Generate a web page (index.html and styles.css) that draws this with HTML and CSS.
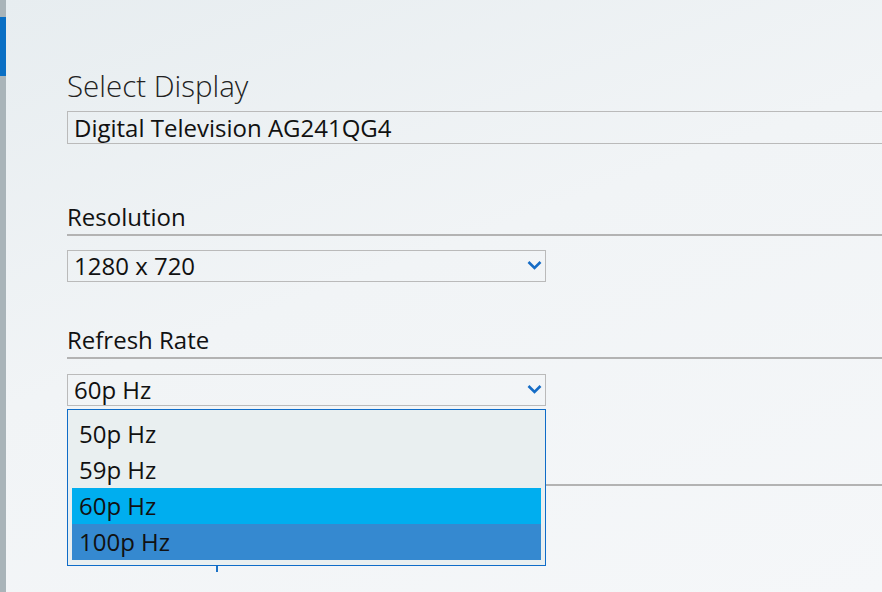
FILE: index.html
```html
<!DOCTYPE html>
<html lang="en">
<head>
<meta charset="utf-8">
<title>Display Settings</title>
<link rel="stylesheet" href="styles.css">
</head>
<body>
<div class="app">
  <div class="rail"><div class="rail-active"></div></div>
  <div class="main">
    <h1 class="title">Select Display</h1>
    <div class="box box-wide">Digital Television AG241QG4</div>

    <div class="section-label label-res">Resolution</div>
    <div class="box select select-res">
      <span>1280 x 720</span>
      <svg class="chev" width="15" height="10" viewBox="0 0 15 10"><path d="M1.5 2 L7.5 8 L13.5 2" fill="none" stroke="#156cc6" stroke-width="2.6"/></svg>
    </div>

    <div class="section-label label-refresh">Refresh Rate</div>
    <div class="select-wrap">
      <div class="box select">
        <span>60p Hz</span>
        <svg class="chev" width="15" height="10" viewBox="0 0 15 10"><path d="M1.5 2 L7.5 8 L13.5 2" fill="none" stroke="#156cc6" stroke-width="2.6"/></svg>
      </div>
      <div class="dropdown">
        <div class="item">50p Hz</div>
        <div class="item">59p Hz</div>
        <div class="item item-hover">60p Hz</div>
        <div class="item item-selected">100p Hz</div>
      </div>
    </div>

    <div class="section-label label-next">&nbsp;</div>
    <div class="under"><div class="tick"></div></div>
  </div>
</div>
</body>
</html>
```

FILE: styles.css
```css
* { box-sizing: border-box; }
html, body { margin: 0; padding: 0; height: 100%; }
body {
  font-family: "Open Sans", "Noto Sans", sans-serif;
  color: #111;
  background: linear-gradient(160deg, #e7edf0 0%, #f1f4f6 45%, #f5f7f9 100%);
  overflow: hidden;
}
.app { display: flex; height: 592px; }
.rail {
  width: 6px;
  flex: none;
  background: #a9b4b9;
}
.rail-active {
  margin-top: 17px;
  height: 59px;
  background: #0a6fc4;
}
.main {
  flex: 1;
  padding-left: 61px;
  padding-top: 66px;
  overflow: hidden;
}
.title {
  margin: 0 0 5px 0;
  font-size: 29.5px;
  line-height: 40px;
  font-weight: 300;
  color: #222;
}
.box {
  height: 33px;
  border: 1px solid #bababa;
  padding-left: 6px;
  font-size: 24px;
  line-height: 31px;
  color: #111;
}
.box-wide { margin-right: -20px; }
.section-label {
  font-size: 24px;
  line-height: 30px;
  padding-bottom: 2px;
  border-bottom: 2px solid #b3b3b3;
  color: #111;
}
.label-res { margin-top: 58px; }
.label-refresh { margin-top: 43px; }
.label-next { margin-top: 46px; }
.select {
  width: 479px;
  height: 32px;
  line-height: 30px;
  display: flex;
  align-items: center;
  justify-content: space-between;
  padding-right: 3px;
}
.select span { line-height: 30px; }
.select-res { margin-top: 14px; }
.chev { display: block; margin-top: -2px; }
.select-wrap { position: relative; margin-top: 15px; width: 479px; }
.dropdown {
  position: absolute;
  left: 0;
  top: 35px;
  width: 479px;
  height: 157px;
  border: 1px solid #0f6cc8;
  background: #e9eff0;
  padding: 6px 4px 5px 4px;
  z-index: 5;
}
.item {
  height: 36px;
  line-height: 36px;
  font-size: 24px;
  padding-left: 7px;
  color: #111;
}
.item-hover { background: #00aeef; }
.item-selected { background: #3589d0; }
.under { height: 40px; }
.tick {
  margin-left: 149px;
  margin-top: 78px;
  width: 2px;
  height: 8px;
  background: #1b72c6;
}
```
